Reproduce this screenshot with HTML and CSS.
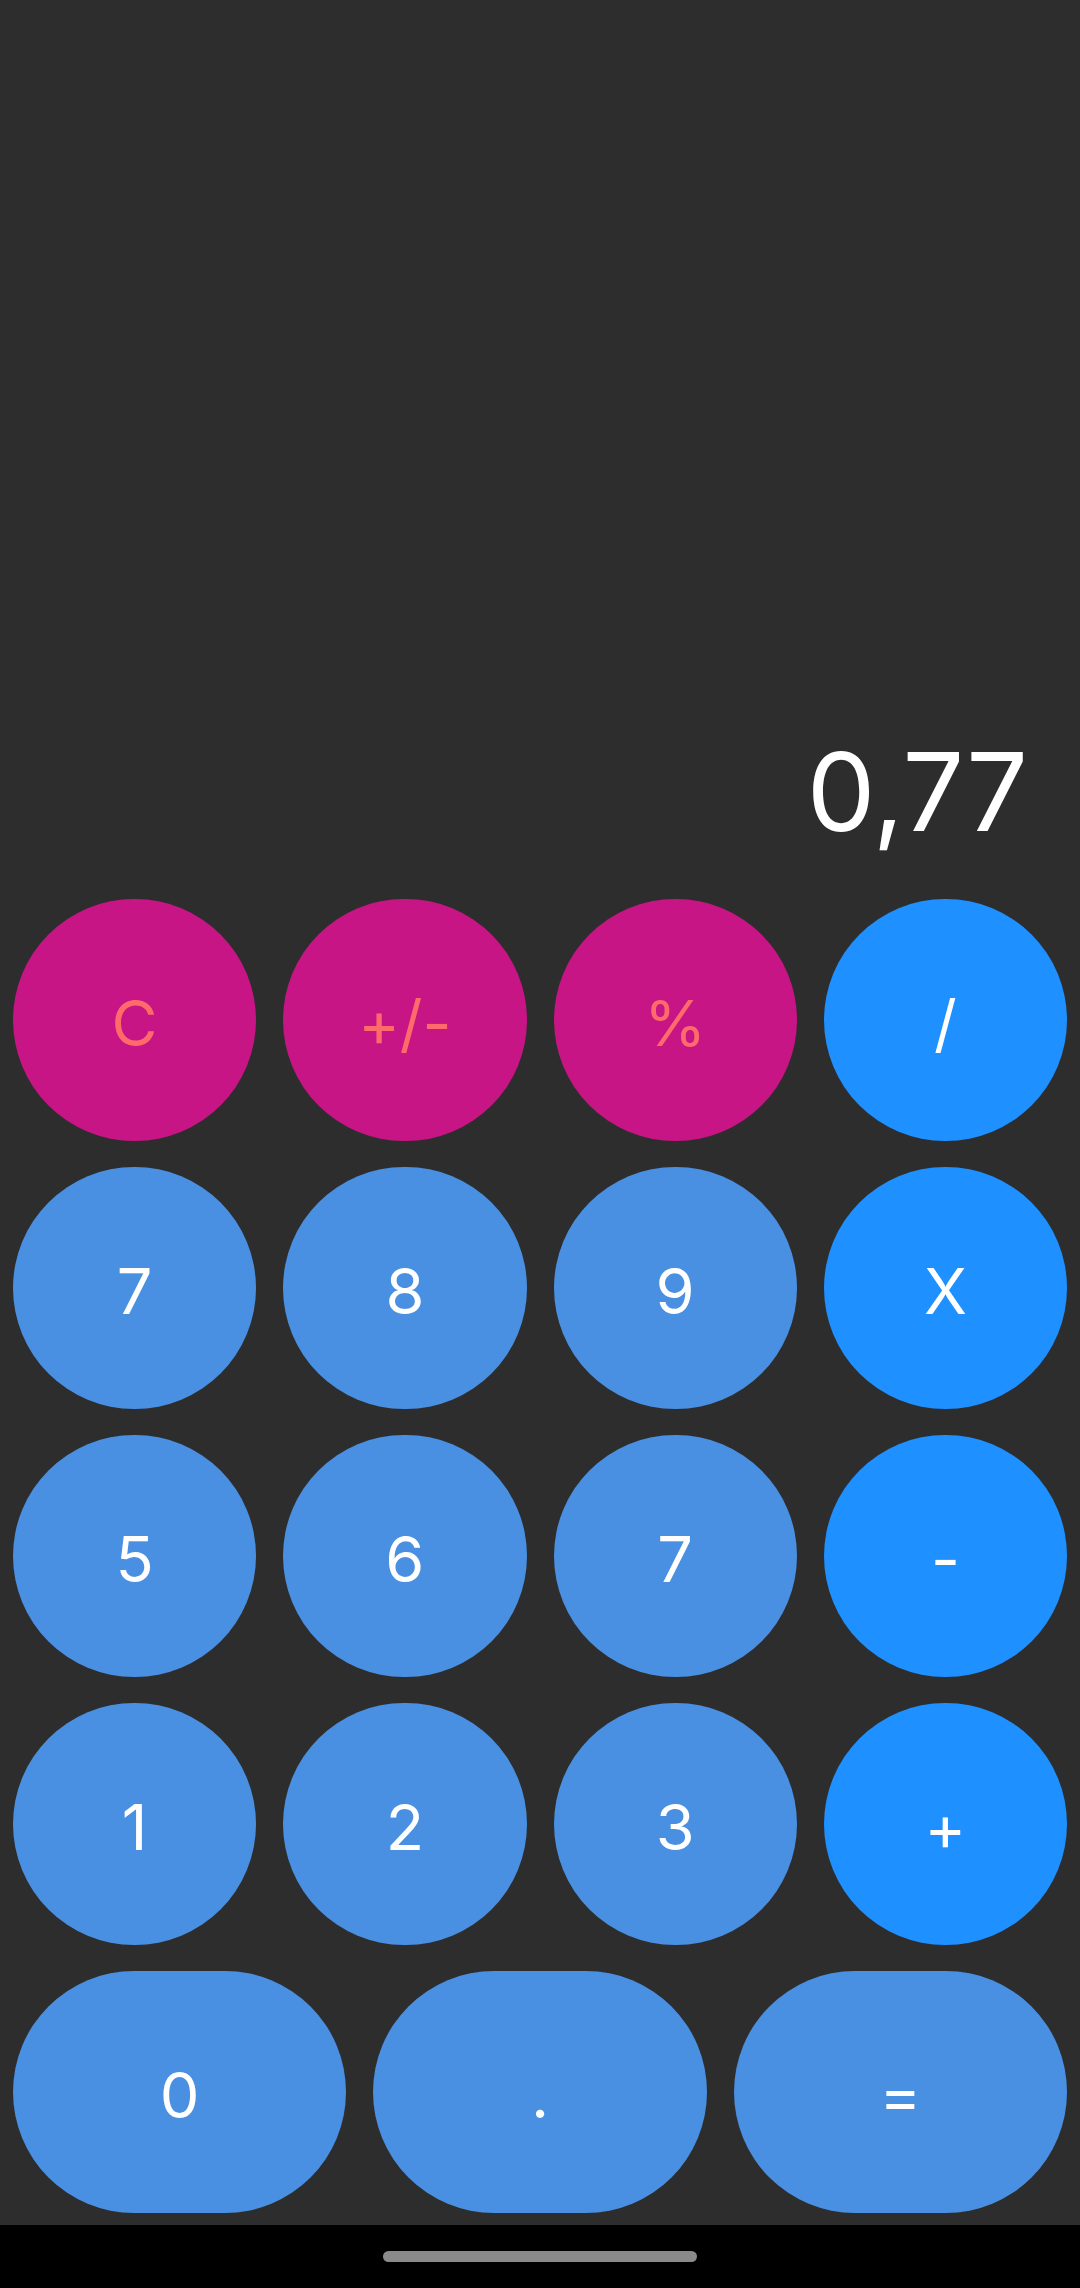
FILE: index.html
```html
<!DOCTYPE html>
<html>
<head>
<meta charset="utf-8">
<link rel="stylesheet" href="styles.css">
</head>
<body>
<div class="app">
  <div class="display">0,77</div>
  <div class="keypad">
    <div class="row four">
      <div class="key fn">C</div>
      <div class="key fn">+/-</div>
      <div class="key fn">%</div>
      <div class="key op">/</div>
    </div>
    <div class="row four">
      <div class="key num">7</div>
      <div class="key num">8</div>
      <div class="key num">9</div>
      <div class="key op">X</div>
    </div>
    <div class="row four">
      <div class="key num">5</div>
      <div class="key num">6</div>
      <div class="key num">7</div>
      <div class="key op">-</div>
    </div>
    <div class="row four">
      <div class="key num">1</div>
      <div class="key num">2</div>
      <div class="key num">3</div>
      <div class="key op">+</div>
    </div>
    <div class="row three">
      <div class="key num">0</div>
      <div class="key num">.</div>
      <div class="key num">=</div>
    </div>
  </div>
</div>
<div class="navbar"><div class="pill"></div></div>
</body>
</html>
```

FILE: styles.css
```css
html, body {
  margin: 0;
  padding: 0;
  background: #2d2d2d;
}
body {
  width: 1080px;
  height: 2288px;
  overflow: hidden;
  font-family: "Inter", "Noto Sans", sans-serif;
}
.app {
  box-sizing: border-box;
  height: 2225px;
  display: flex;
  flex-direction: column;
  justify-content: flex-end;
  padding: 0 13px 12px 13px;
}
.display {
  color: #ffffff;
  font-size: 109px;
  line-height: 109px;
  text-align: right;
  padding-right: 39px;
  margin-bottom: 53px;
}
.keypad {
  display: flex;
  flex-direction: column;
  gap: 26px;
}
.row {
  display: grid;
  column-gap: 27px;
  height: 242px;
}
.row.four {
  grid-template-columns: repeat(4, 1fr);
}
.row.three {
  grid-template-columns: repeat(3, 1fr);
}
.key {
  border-radius: 121px;
  display: flex;
  align-items: center;
  justify-content: center;
  font-size: 63px;
  color: #ffffff;
  padding-top: 6px;
  box-sizing: border-box;
}
.key.num {
  background: #4a90e2;
}
.key.op {
  background: #1e90ff;
}
.key.fn {
  background: #c71585;
  color: #ff6b6b;
}
.navbar {
  height: 63px;
  background: #000000;
  display: flex;
  justify-content: center;
  align-items: center;
}
.pill {
  width: 314px;
  height: 11px;
  border-radius: 6px;
  background: #8a8a8a;
}
```
